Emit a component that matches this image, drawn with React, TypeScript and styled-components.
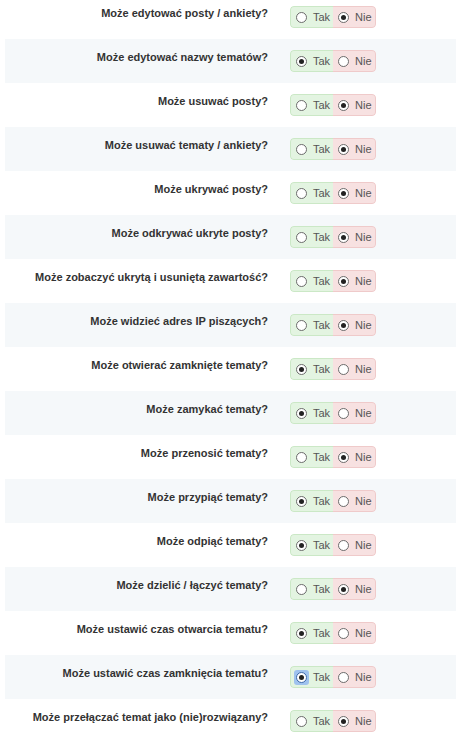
import React from 'react'
import styled, { createGlobalStyle } from 'styled-components'

const GlobalStyle = createGlobalStyle`
  body {
    margin: 0;
    background: #fff;
    font-family: "Liberation Sans", Arial, sans-serif;
  }
`

const List = styled.div`
  margin-top: -5px;
  padding: 0 5px;
`

const Row = styled.div<{ $striped: boolean }>`
  display: grid;
  grid-template-columns: 263px auto;
  column-gap: 22px;
  align-items: start;
  height: 44px;
  box-sizing: border-box;
  padding-top: 11px;
  background: ${({ $striped }) => ($striped ? '#f5f8fa' : 'transparent')};
`

const Label = styled.div`
  text-align: right;
  font-size: 11px;
  line-height: 15px;
  font-weight: bold;
  color: #333;
  white-space: nowrap;
`

const Toggle = styled.div`
  display: flex;
  width: 86px;
  height: 22px;
  border-radius: 4px;
  overflow: hidden;
`

const Option = styled.label<{ $yes: boolean }>`
  flex: 1;
  display: flex;
  align-items: center;
  gap: 6px;
  padding-left: 5px;
  box-sizing: border-box;
  font-size: 11px;
  color: #555;
  background: ${({ $yes }) => ($yes ? '#e3f4e1' : '#f7e1e1')};
  border: 1px solid ${({ $yes }) => ($yes ? '#cbe8c6' : '#efcaca')};
  border-left-width: ${({ $yes }) => ($yes ? '1px' : '0')};
  border-right-width: ${({ $yes }) => ($yes ? '0' : '1px')};
  border-radius: ${({ $yes }) => ($yes ? '4px 0 0 4px' : '0 4px 4px 0')};
`

const FocusRing = styled.span<{ $active?: boolean }>`
  display: flex;
  padding: 2px;
  margin: -2px;
  border-radius: 3px;
  background: ${({ $active }) => ($active ? '#9fc2ee' : 'transparent')};
`

const Radio = styled.span<{ $checked: boolean; $focused?: boolean }>`
  position: relative;
  width: 9px;
  height: 9px;
  border-radius: 50%;
  border: 1px solid ${({ $focused }) => ($focused ? '#3f6aa8' : '#6b6b6b')};
  background: #fff;
  flex-shrink: 0;

  &::after {
    content: '';
    display: ${({ $checked }) => ($checked ? 'block' : 'none')};
    position: absolute;
    left: 2px;
    top: 2px;
    width: 5px;
    height: 5px;
    border-radius: 50%;
    background: #222;
  }
`

const permissions: { label: string; yes: boolean; focused?: boolean }[] = [
  { label: 'Może edytować posty / ankiety?', yes: false },
  { label: 'Może edytować nazwy tematów?', yes: true },
  { label: 'Może usuwać posty?', yes: false },
  { label: 'Może usuwać tematy / ankiety?', yes: false },
  { label: 'Może ukrywać posty?', yes: false },
  { label: 'Może odkrywać ukryte posty?', yes: false },
  { label: 'Może zobaczyć ukrytą i usuniętą zawartość?', yes: false },
  { label: 'Może widzieć adres IP piszących?', yes: false },
  { label: 'Może otwierać zamknięte tematy?', yes: true },
  { label: 'Może zamykać tematy?', yes: true },
  { label: 'Może przenosić tematy?', yes: false },
  { label: 'Może przypiąć tematy?', yes: true },
  { label: 'Może odpiąć tematy?', yes: true },
  { label: 'Może dzielić / łączyć tematy?', yes: false },
  { label: 'Może ustawić czas otwarcia tematu?', yes: true },
  { label: 'Może ustawić czas zamknięcia tematu?', yes: true, focused: true },
  { label: 'Może przełączać temat jako (nie)rozwiązany?', yes: false },
]

export default function App() {
  return (
    <List>
      <GlobalStyle />
      {permissions.map(({ label, yes, focused }, i) => (
        <Row key={label} $striped={i % 2 === 1}>
          <Label>{label}</Label>
          <Toggle>
            <Option $yes>
              <FocusRing $active={focused}>
                <Radio $checked={yes} $focused={focused} />
              </FocusRing>
              Tak
            </Option>
            <Option $yes={false}>
              <FocusRing>
                <Radio $checked={!yes} />
              </FocusRing>
              Nie
            </Option>
          </Toggle>
        </Row>
      ))}
    </List>
  )
}
